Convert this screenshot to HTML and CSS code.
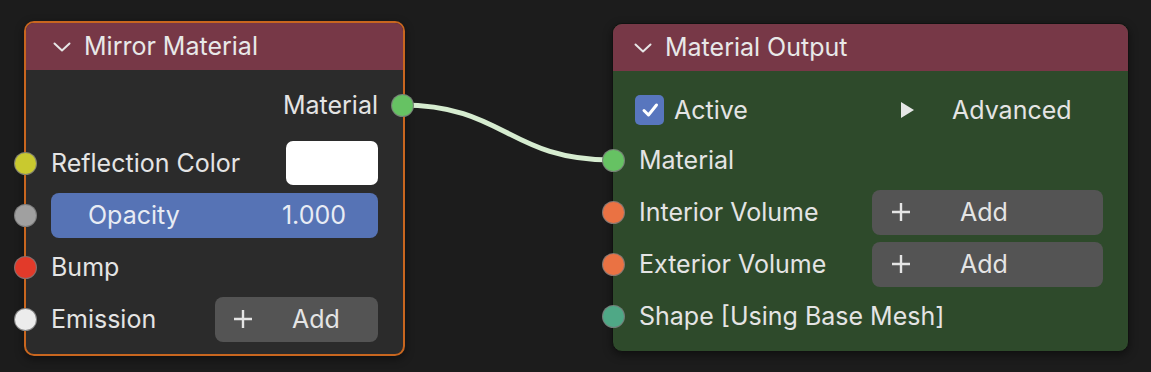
FILE: index.html
```html
<!DOCTYPE html>
<html>
<head>
<meta charset="utf-8">
<link rel="stylesheet" href="styles.css">
</head>
<body>
<div class="canvas">
  <svg class="wire" width="1151" height="372" viewBox="0 0 1151 372">
    <path d="M401 105 C 505 105, 508 160, 612 160" fill="none" stroke="#d6ecd0" stroke-width="5" stroke-linecap="round"/>
  </svg>

  <div class="node node-mirror">
    <div class="node-header">
      <svg class="chev" width="18" height="10" viewBox="0 0 18 10"><path d="M1.5 1.5 L9 8.5 L16.5 1.5" fill="none" stroke="#e6e6e6" stroke-width="2" stroke-linecap="round" stroke-linejoin="round"/></svg>
      <span>Mirror Material</span>
    </div>
    <div class="node-body">
      <div class="row row-out">
        <span class="label">Material</span>
        <span class="socket socket-right sock-green"></span>
      </div>
      <div class="row">
        <span class="socket sock-yellow"></span>
        <span class="label grow">Reflection Color</span>
        <span class="swatch"></span>
      </div>
      <div class="row">
        <span class="socket sock-grey"></span>
        <div class="field">
          <span>Opacity</span>
          <span>1.000</span>
        </div>
      </div>
      <div class="row">
        <span class="socket sock-red"></span>
        <span class="label grow">Bump</span>
      </div>
      <div class="row">
        <span class="socket sock-white"></span>
        <span class="label grow">Emission</span>
        <div class="btn btn-small">
          <svg class="plus" width="22" height="22" viewBox="0 0 22 22"><path d="M11 2 V20 M2 11 H20" stroke="#e4e4e4" stroke-width="2.4"/></svg>
          <span class="btn-text">Add</span>
        </div>
      </div>
    </div>
  </div>

  <div class="node node-output">
    <div class="node-header">
      <svg class="chev" width="18" height="10" viewBox="0 0 18 10"><path d="M1.5 1.5 L9 8.5 L16.5 1.5" fill="none" stroke="#e6e6e6" stroke-width="2" stroke-linecap="round" stroke-linejoin="round"/></svg>
      <span>Material Output</span>
    </div>
    <div class="node-body">
      <div class="row row-active">
        <div class="active grow">
          <span class="check">
            <svg width="20" height="20" viewBox="0 0 20 20"><path d="M4 10.5 L8.5 15 L16.5 5" fill="none" stroke="#ffffff" stroke-width="3" stroke-linecap="round" stroke-linejoin="round"/></svg>
          </span>
          <span class="label">Active</span>
        </div>
        <div class="advanced">
          <svg class="tri" width="15" height="18" viewBox="0 0 15 18"><path d="M1 1 L14 9 L1 17 Z" fill="#e6e6e6"/></svg>
          <span class="label">Advanced</span>
        </div>
      </div>
      <div class="row">
        <span class="socket sock-green"></span>
        <span class="label grow">Material</span>
      </div>
      <div class="row">
        <span class="socket sock-orange"></span>
        <span class="label grow">Interior Volume</span>
        <div class="btn btn-wide">
          <svg class="plus" width="22" height="22" viewBox="0 0 22 22"><path d="M11 2 V20 M2 11 H20" stroke="#e4e4e4" stroke-width="2.4"/></svg>
          <span class="btn-text">Add</span>
        </div>
      </div>
      <div class="row">
        <span class="socket sock-orange"></span>
        <span class="label grow">Exterior Volume</span>
        <div class="btn btn-wide">
          <svg class="plus" width="22" height="22" viewBox="0 0 22 22"><path d="M11 2 V20 M2 11 H20" stroke="#e4e4e4" stroke-width="2.4"/></svg>
          <span class="btn-text">Add</span>
        </div>
      </div>
      <div class="row">
        <span class="socket sock-teal"></span>
        <span class="label grow">Shape [Using Base Mesh]</span>
      </div>
    </div>
  </div>
</div>
</body>
</html>
```

FILE: styles.css
```css
* { box-sizing: border-box; }

html, body {
  margin: 0;
  padding: 0;
  background: #1c1c1c;
}

body {
  font-family: Inter, "Noto Sans", "DejaVu Sans", sans-serif;
  font-size: 25px;
  color: #e4e4e4;
}

.canvas {
  position: relative;
  width: 1151px;
  height: 372px;
  overflow: hidden;
  background: #1c1c1c;
}

.wire {
  position: absolute;
  left: 0;
  top: 0;
  z-index: 1;
}

.node {
  position: absolute;
  display: flex;
  flex-direction: column;
  border-radius: 10px;
  box-shadow: 0 3px 10px rgba(0,0,0,0.45);
}

.node-mirror {
  left: 24px;
  top: 21px;
  width: 381px;
  height: 335px;
  border: 2px solid #c8661f;
  background: #2b2b2b;
  z-index: 2;
}

.node-output {
  left: 612px;
  top: 23px;
  width: 517px;
  height: 329px;
  border: 1px solid #111111;
  background: #2e4a2b;
  z-index: 2;
}

.node-header {
  height: 47px;
  display: flex;
  align-items: center;
  gap: 13px;
  padding-left: 27px;
  padding-bottom: 1px;
  background: #773847;
  border-radius: 8px 8px 0 0;
  color: #e8e8e8;
  flex-shrink: 0;
}

.node-output .node-header {
  height: 47px;
  padding-left: 21px;
  border-radius: 9px 9px 0 0;
}

.chev {
  margin-top: 2px;
}

.node-body {
  display: flex;
  flex-direction: column;
  padding: 9px 25px 0 25px;
}

.node-output .node-body {
  padding: 11px 25px 0 26px;
}

.row {
  position: relative;
  height: 52px;
  display: flex;
  align-items: center;
}

.row-active {
  padding-top: 4px;
}

.row-out {
  justify-content: flex-end;
  margin-bottom: 6px;
}

.grow { flex: 1; }

.label {
  white-space: nowrap;
}

.socket {
  position: absolute;
  left: -37px;
  top: 50%;
  width: 23px;
  height: 23px;
  margin-top: -11.5px;
  border-radius: 50%;
  border: 1.5px solid rgba(120,120,120,0.85);
  z-index: 3;
}

.node-output .socket {
  left: -37.5px;
}

.socket-right {
  left: auto;
  right: -36px;
}

.sock-green { background: #66c263; }
.sock-yellow { background: #c9c92f; }
.sock-grey { background: #a0a0a0; }
.sock-red { background: #e23a2a; }
.sock-white { background: #ececec; }
.sock-orange { background: #ea7243; }
.sock-teal { background: #4fa886; }

.swatch {
  width: 92px;
  height: 44px;
  border-radius: 7px;
  background: #ffffff;
}

.field {
  flex: 1;
  height: 45px;
  border-radius: 8px;
  background: #5673b5;
  display: flex;
  align-items: center;
  justify-content: space-between;
  padding: 0 32px 0 37px;
  color: #e8ecf4;
}

.btn {
  height: 45px;
  border-radius: 8px;
  background: #545454;
  display: flex;
  align-items: center;
  color: #e4e4e4;
}

.btn-small {
  width: 163px;
  padding-left: 17px;
}

.btn-small .btn-text {
  margin-left: 38px;
}

.btn-wide {
  width: 231px;
  padding-left: 18px;
}

.btn-wide .btn-text {
  margin-left: 48px;
}

.active {
  display: flex;
  align-items: center;
  gap: 10px;
}

.check {
  width: 29px;
  height: 30px;
  margin-left: -4px;
  border-radius: 5px;
  background: #5876be;
  display: flex;
  align-items: center;
  justify-content: center;
}

.advanced {
  width: 231px;
  display: flex;
  align-items: center;
  padding-left: 28px;
  gap: 37px;
}
```
